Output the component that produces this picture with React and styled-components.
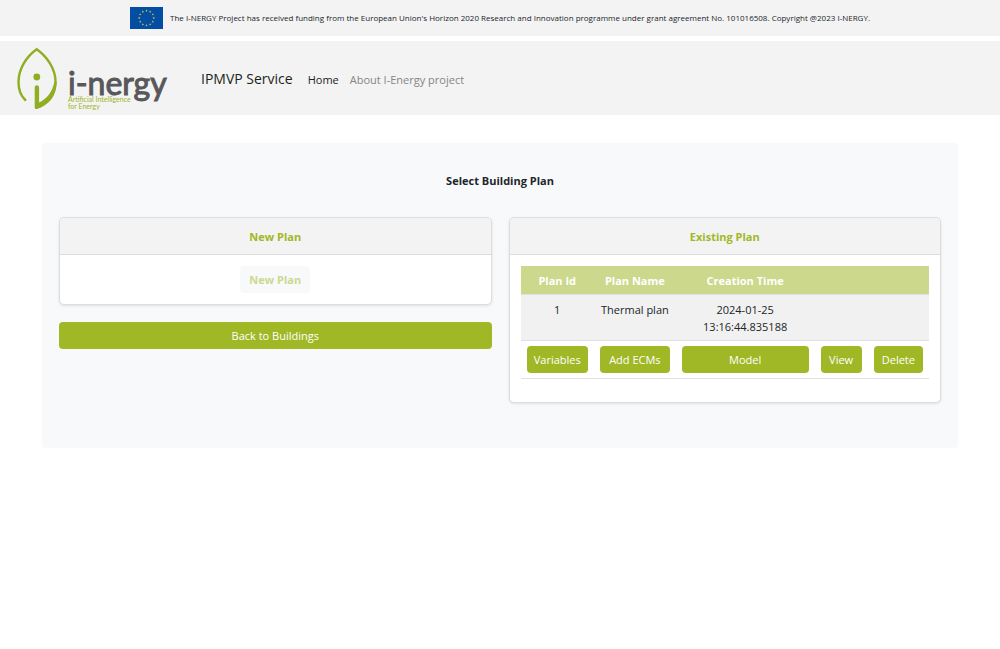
import React from "react";
import styled, { createGlobalStyle } from "styled-components";

const GlobalStyle = createGlobalStyle`
  * { box-sizing: border-box; }
  body {
    margin: 0;
    background: #fff;
    color: #212529;
    font-family: "Open Sans", "Noto Sans", sans-serif;
    font-size: 11px;
    line-height: 17px;
  }
`;

const FundingBar = styled.div`
  display: flex;
  align-items: center;
  justify-content: center;
  gap: 7px;
  height: 36px;
  padding: 0 8px;
  background: #f3f3f3;
  font-size: 8px;
  line-height: 14px;
`;

const Flag = styled.svg`
  flex: none;
  width: 33px;
  height: 22px;
`;

const NavBar = styled.header`
  display: flex;
  align-items: center;
  margin-top: 5px;
  padding: 4px 16px;
  min-height: 74px;
  background: #f3f3f3;
`;

const LogoLink = styled.a`
  display: flex;
  align-items: flex-end;
  gap: 10px;
  width: 168px;
  height: 66px;
  color: #58585a;
  text-decoration: none;
`;

const Leaf = styled.svg`
  flex: none;
  width: 42px;
  height: 66px;
`;

const Wordmark = styled.span`
  display: flex;
  flex-direction: column;
  padding-bottom: 1px;
  white-space: nowrap;
  font-family: Lato, sans-serif;
`;

const LogoName = styled.span`
  font-size: 32px;
  line-height: 26px;
  -webkit-text-stroke: 1px #58585a;
`;

const LogoTagline = styled.span`
  color: #9cb529;
  font-size: 7px;
  line-height: 7px;
`;

const Menu = styled.div`
  display: flex;
  align-items: center;
  padding-top: 2px;
`;

const Brand = styled.a`
  margin: 0 15px 0 17px;
  color: #1c1f22;
  font-size: 14px;
  line-height: 20px;
  text-decoration: none;
`;

const Nav = styled.nav`
  display: flex;
  gap: 11px;
`;

const NavLink = styled.a`
  color: ${(p) => (p.$active ? "#222" : "#858585")};
  text-decoration: none;
`;

const Panel = styled.main`
  margin: 28px 42px;
  padding: 29px 17px 45px;
  border-radius: 4px;
  background: #f8f9fb;
`;

const Title = styled.h1`
  margin: 0 0 28px;
  font-size: 11px;
  line-height: 17px;
  text-align: center;
`;

const Columns = styled.div`
  display: grid;
  grid-template-columns: 1fr 1fr;
  align-items: start;
  gap: 17px;
`;

const Column = styled.div`
  display: grid;
  gap: 17px;
`;

const Card = styled.section`
  overflow: hidden;
  border: 1px solid #dcdddf;
  border-radius: 5px;
  background: #fff;
  box-shadow: 0 1px 3px rgba(0, 0, 0, 0.1);
`;

const CardTitle = styled.h2`
  margin: 0;
  padding: 10px 10px 9px;
  border-bottom: 1px solid #dcdddf;
  background: #f3f3f3;
  color: #a0b826;
  font-size: 11px;
  line-height: 17px;
  text-align: center;
`;

const CardBody = styled.div`
  padding: 11px 11px ${(p) => (p.$roomy ? "23px" : "11px")};
  text-align: center;
`;

const Button = styled.button`
  width: ${(p) => (p.$fill ? "100%" : "auto")};
  height: 27px;
  padding: 0 ${(p) => (p.$fill ? "0" : "9px")};
  border: 0;
  border-radius: 4px;
  background: #a0b826;
  color: #fff;
  font: inherit;
  white-space: nowrap;
  cursor: pointer;

  &:disabled {
    background: #f8f9fb;
    color: #cdd88e;
    font-weight: 700;
    cursor: default;
  }
`;

const Table = styled.table`
  width: 100%;
  table-layout: fixed;
  border-collapse: collapse;
`;

const HeadCell = styled.th`
  width: ${(p) => p.$width};
  padding: 6px 0 5px;
  border-bottom: 1px solid #dee2e6;
  background: #ccd88c;
  color: #fff;
`;

const Cell = styled.td`
  padding: 6px 6px 5px;
  border-bottom: 1px solid #dee2e6;
  background: ${(p) => (p.$striped ? "#f1f1f1" : "#fff")};
  vertical-align: top;
`;

const ActionCell = styled(Cell)`
  padding: 5px 6px;
`;

const STARS = Array.from({ length: 12 }, (_, i) => {
  const a = (i * Math.PI) / 6;
  return [16.5 + 7.3 * Math.sin(a), 11 - 7.3 * Math.cos(a)];
});

const STAR_PATH =
  "M0 -1.2L.3 -.4L1.15 -.37L.47 .15L.7 .97L0 .5L-.7 .97L-.47 .15L-1.15 -.37L-.3 -.4Z";

function EuFlag() {
  return (
    <Flag viewBox="0 0 33 22" role="img" aria-label="European Union">
      <rect width="33" height="22" fill="#034ea2" />
      {STARS.map(([x, y], i) => (
        <path key={i} d={STAR_PATH} transform={`translate(${x} ${y})`} fill="#e3df2c" />
      ))}
    </Flag>
  );
}

function Logo() {
  return (
    <LogoLink href="#" aria-label="i-nergy home">
      <Leaf viewBox="0 0 42 66" aria-hidden="true">
        <path
          d="M9.3 55C4.5 50.5 2.5 44.5 2.5 37C2.5 24 10.5 11.5 20.7 4.3C31 11.5 39.5 24 39.5 36.5C39.5 49.5 32.5 58.5 20.8 62.5"
          fill="none"
          stroke="#8fae22"
          strokeWidth="2.4"
          strokeLinecap="round"
        />
        <path
          d="M18.7 42.5Q18.7 40.3 20.9 40.3Q23.1 40.3 23.1 42.5V57.5C31 53.5 36.5 47 38.3 37H40.7C40 51 32.5 60.5 20.5 64Q18.7 64.3 18.7 62.5Z"
          fill="#8fae22"
        />
        <circle cx="20.8" cy="32" r="3.4" fill="#8fae22" />
      </Leaf>
      <Wordmark>
        <LogoName>i-nergy</LogoName>
        <LogoTagline>Artificial Intelligence</LogoTagline>
        <LogoTagline>for Energy</LogoTagline>
      </Wordmark>
    </LogoLink>
  );
}

const COLUMNS = [
  { label: "Plan Id", width: "18%", action: "Variables" },
  { label: "Plan Name", width: "20%", action: "Add ECMs" },
  { label: "Creation Time", width: "34%", action: "Model" },
  { label: "", width: "13%", action: "View" },
  { label: "", width: "15%", action: "Delete" },
];

export default function App() {
  return (
    <>
      <GlobalStyle />
      <FundingBar>
        <EuFlag />
        <span>
          The I-NERGY Project has received funding from the European Union's Horizon 2020 Research
          and Innovation programme under grant agreement No. 101016508. Copyright @2023 I-NERGY.
        </span>
      </FundingBar>
      <NavBar>
        <Logo />
        <Menu>
          <Brand href="#">IPMVP Service</Brand>
          <Nav>
            <NavLink href="#" $active>Home</NavLink>
            <NavLink href="#">About I-Energy project</NavLink>
          </Nav>
        </Menu>
      </NavBar>
      <Panel>
        <Title>Select Building Plan</Title>
        <Columns>
          <Column>
            <Card>
              <CardTitle>New Plan</CardTitle>
              <CardBody>
                <Button disabled>New Plan</Button>
              </CardBody>
            </Card>
            <Button $fill>Back to Buildings</Button>
          </Column>
          <Card>
            <CardTitle>Existing Plan</CardTitle>
            <CardBody $roomy>
              <Table>
                <thead>
                  <tr>
                    {COLUMNS.map((c) => (
                      <HeadCell key={c.action} $width={c.width}>{c.label}</HeadCell>
                    ))}
                  </tr>
                </thead>
                <tbody>
                  <tr>
                    <Cell $striped>1</Cell>
                    <Cell $striped>Thermal plan</Cell>
                    <Cell $striped>2024-01-25 13:16:44.835188</Cell>
                    <Cell $striped />
                    <Cell $striped />
                  </tr>
                  <tr>
                    {COLUMNS.map((c) => (
                      <ActionCell key={c.action}>
                        <Button $fill>{c.action}</Button>
                      </ActionCell>
                    ))}
                  </tr>
                </tbody>
              </Table>
            </CardBody>
          </Card>
        </Columns>
      </Panel>
    </>
  );
}
